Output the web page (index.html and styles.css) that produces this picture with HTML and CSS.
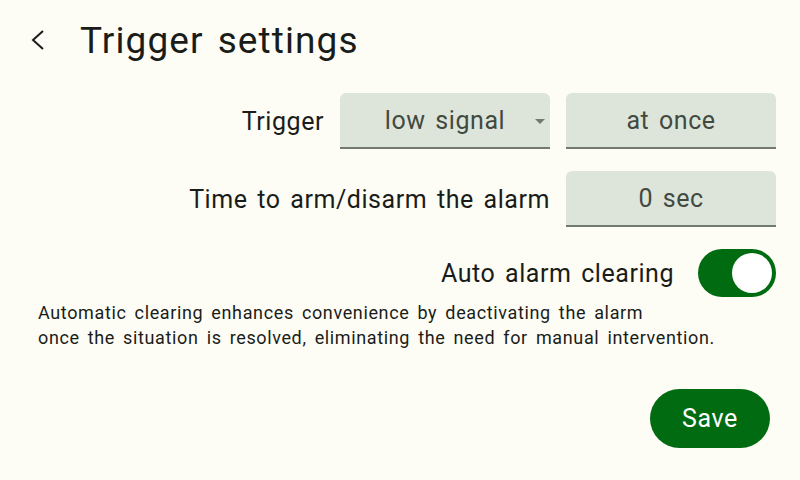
FILE: index.html
```html
<!DOCTYPE html>
<html lang="en">
<head>
<meta charset="utf-8">
<title>Trigger settings</title>
<link rel="stylesheet" href="styles.css">
</head>
<body>
<div class="screen">
  <header class="top-bar">
    <button class="back" aria-label="Back">
      <svg width="20" height="20" viewBox="0 0 20 20"><path d="M15 1 L5 10 L15 19" fill="none" stroke="#1a1c19" stroke-width="2"/></svg>
    </button>
    <h1 class="title">Trigger settings</h1>
  </header>

  <main class="form">
    <div class="row">
      <span class="label">Trigger</span>
      <div class="field select">
        <span>low signal</span>
        <span class="caret"></span>
      </div>
      <div class="field">at once</div>
    </div>
    <div class="row">
      <span class="label">Time to arm/disarm the alarm</span>
      <div class="field">0 sec</div>
    </div>
    <div class="row row-switch">
      <span class="label">Auto alarm clearing</span>
      <div class="switch on"><span class="thumb"></span></div>
    </div>
  </main>

  <p class="hint">Automatic clearing enhances convenience by deactivating the alarm<br>once the situation is resolved, eliminating the need for manual intervention.</p>

  <div class="actions">
    <button class="save">Save</button>
  </div>
</div>
</body>
</html>
```
FILE: styles.css
```css
html, body {
  margin: 0;
  padding: 0;
}

body {
  width: 800px;
  height: 480px;
  background: #fdfdf5;
  font-family: Roboto, "Noto Sans", sans-serif;
  letter-spacing: 0.55px;
  word-spacing: 3px;
  color: #1a1c19;
  overflow: hidden;
}

.screen {
  display: flex;
  flex-direction: column;
  height: 480px;
}

.top-bar {
  display: flex;
  align-items: center;
  height: 80px;
  padding-left: 28px;
}

.back {
  display: flex;
  align-items: center;
  justify-content: center;
  width: 20px;
  height: 20px;
  padding: 0;
  margin: 0 32px 0 0;
  border: 0;
  background: none;
}

.title {
  margin: 0;
  font-size: 37px;
  font-weight: 400;
  line-height: 1;
  letter-spacing: 1.1px;
  word-spacing: 3.7px;
}

.form {
  display: flex;
  flex-direction: column;
  align-items: flex-end;
  gap: 22px;
  margin-top: 13px;
  padding-right: 24px;
}

.row {
  display: flex;
  align-items: center;
  gap: 16px;
}

.row-switch {
  gap: 24px;
}

.label {
  font-size: 25px;
}

.field {
  position: relative;
  box-sizing: border-box;
  width: 210px;
  height: 56px;
  display: flex;
  align-items: center;
  justify-content: center;
  background: #dde5db;
  border-bottom: 2px solid #72796f;
  border-radius: 6px 6px 0 0;
  font-size: 25px;
  color: #424940;
}

.caret {
  position: absolute;
  right: 5px;
  top: 26px;
  width: 0;
  height: 0;
  border-left: 5px solid transparent;
  border-right: 5px solid transparent;
  border-top: 5px solid #72796f;
}

.switch {
  box-sizing: border-box;
  width: 78px;
  height: 48px;
  border-radius: 24px;
  background: #006b10;
  display: flex;
  align-items: center;
  justify-content: flex-end;
  padding-right: 4px;
}

.thumb {
  width: 40px;
  height: 40px;
  border-radius: 50%;
  background: #ffffff;
}

.hint {
  margin: 3px 0 0 38px;
  font-size: 18px;
  line-height: 25px;
  letter-spacing: 0.63px;
  word-spacing: 3px;
  color: #1a1c19;
}

.actions {
  display: flex;
  justify-content: flex-end;
  padding-right: 30px;
  margin-top: 39px;
}

.save {
  width: 120px;
  height: 59px;
  border: 0;
  border-radius: 30px;
  background: #006b10;
  color: #ffffff;
  font-family: Roboto, "Noto Sans", sans-serif;
  font-size: 25px;
  letter-spacing: 0.6px;
  padding: 0;
}
```
